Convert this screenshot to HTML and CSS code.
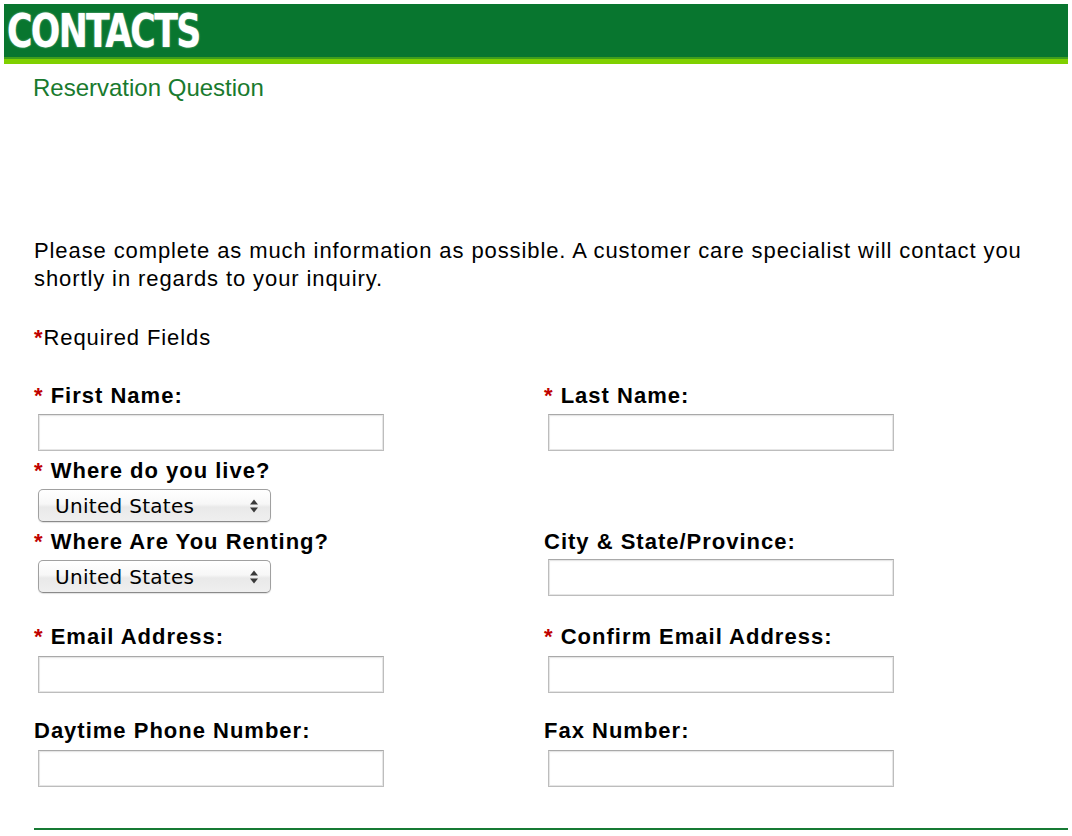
FILE: index.html
```html
<!DOCTYPE html>
<html lang="en">
<head>
<meta charset="utf-8">
<title>Contacts</title>
<link rel="stylesheet" href="styles.css">
</head>
<body>
<header class="banner">
  <h1 class="banner-title">CONTACTS</h1>
</header>
<div class="banner-stripe"></div>

<main class="content">
  <h2 class="subtitle">Reservation Question</h2>

  <p class="intro">Please complete as much information as possible. A customer care specialist will contact you shortly in regards to your inquiry.</p>

  <p class="required-note"><span class="req">*</span>Required Fields</p>

  <form class="form">
    <div class="row">
      <div class="field">
        <label class="label"><span class="req">*</span> First Name:</label>
        <input class="text-input" type="text">
      </div>
      <div class="field">
        <label class="label"><span class="req">*</span> Last Name:</label>
        <input class="text-input" type="text">
      </div>
    </div>

    <div class="row">
      <div class="field">
        <label class="label"><span class="req">*</span> Where do you live?</label>
        <div class="select-wrap">
          <select class="select"><option>United States</option></select>
          <svg class="select-arrows" width="10" height="16" viewBox="0 0 10 16"><path d="M5 1.5 L9 6.5 L1 6.5 Z M5 14.5 L9 9.5 L1 9.5 Z" fill="#3a3a3a"/></svg>
        </div>
      </div>
      <div class="field"></div>
    </div>

    <div class="row">
      <div class="field">
        <label class="label"><span class="req">*</span> Where Are You Renting?</label>
        <div class="select-wrap">
          <select class="select"><option>United States</option></select>
          <svg class="select-arrows" width="10" height="16" viewBox="0 0 10 16"><path d="M5 1.5 L9 6.5 L1 6.5 Z M5 14.5 L9 9.5 L1 9.5 Z" fill="#3a3a3a"/></svg>
        </div>
      </div>
      <div class="field">
        <label class="label">City &amp; State/Province:</label>
        <input class="text-input input-tight" type="text">
      </div>
    </div>

    <div class="row row-spaced row-email">
      <div class="field">
        <label class="label"><span class="req">*</span> Email Address:</label>
        <input class="text-input" type="text">
      </div>
      <div class="field">
        <label class="label"><span class="req">*</span> Confirm Email Address:</label>
        <input class="text-input" type="text">
      </div>
    </div>

    <div class="row row-spaced row-phone">
      <div class="field">
        <label class="label">Daytime Phone Number:</label>
        <input class="text-input" type="text">
      </div>
      <div class="field">
        <label class="label">Fax Number:</label>
        <input class="text-input" type="text">
      </div>
    </div>
  </form>

  <hr class="rule">
</main>
</body>
</html>
```

FILE: styles.css
```css
html, body {
  background: #ffffff;
}

body {
  margin: 4px;
  font-family: "Liberation Sans", Arial, Helvetica, sans-serif;
  color: #000;
}

.banner {
  height: 53px;
  background: #08762f;
  display: flex;
  align-items: center;
  overflow: hidden;
}

.banner-title {
  margin: 0 0 0 3px;
  font-family: "DejaVu Sans Condensed", "DejaVu Sans", sans-serif;
  font-weight: bold;
  font-size: 46px;
  line-height: 53px;
  letter-spacing: -2px;
  color: #ffffff;
  text-shadow: 0 0 2px rgba(255, 255, 255, 0.6);
  transform: translateY(1px) scaleX(0.84);
  transform-origin: left center;
}

.banner-stripe {
  height: 5px;
  background: #7fd000;
  border-top: 2px solid #3f9f1c;
}

.content {
  padding-left: 30px;
}

.subtitle {
  margin: 10px 0 0 -1px;
  font-weight: normal;
  font-size: 24px;
  line-height: 28px;
  color: #197a2e;
}

.intro {
  margin: 135px 0 0 0;
  font-size: 22px;
  letter-spacing: 0.9px;
  line-height: 28px;
  padding-right: 20px;
}

.required-note {
  margin: 31px 0 0 0;
  font-size: 22px;
  letter-spacing: 0.9px;
  line-height: 28px;
}

.req {
  color: #c00000;
  font-weight: bold;
}

.form {
  margin-top: 31px;
}

.row {
  display: grid;
  grid-template-columns: 510px 510px;
  margin-bottom: 7px;
}

.row-email {
  margin-top: 28px;
}

.row-phone {
  margin-top: 25px;
}

.field {
  display: flex;
  flex-direction: column;
  align-items: flex-start;
}

.label {
  font-weight: bold;
  font-size: 22px;
  letter-spacing: 1px;
  line-height: 26px;
  white-space: nowrap;
}

.text-input {
  margin: 5px 0 0 4px;
  width: 346px;
  height: 37px;
  box-sizing: border-box;
  border: 1px solid #bdbdbd;
  border-top-color: #a9a9a9;
  box-shadow: inset 0 0 0 1px #e6e6e6, inset 0 1px 2px rgba(0, 0, 0, 0.08);
  background: #fff;
  padding: 0 6px;
  font-size: 18px;
}

.input-tight {
  margin-top: 4px;
}

.row-spaced .text-input {
  margin-top: 6px;
}

.select-wrap {
  position: relative;
  margin: 5px 0 0 4px;
  width: 233px;
  height: 33px;
}

.select {
  appearance: none;
  -webkit-appearance: none;
  width: 233px;
  height: 33px;
  box-sizing: border-box;
  border: 1px solid #a0a0a0;
  border-bottom-color: #8a8a8a;
  border-radius: 5px;
  background: linear-gradient(#ffffff 0%, #f7f7f7 45%, #e9e9e9 55%, #efefef 100%);
  box-shadow: 0 1px 1px rgba(0, 0, 0, 0.12);
  padding: 0 0 0 16px;
  font-family: "DejaVu Sans", sans-serif;
  font-size: 20px;
  letter-spacing: 0.3px;
  color: #000;
}

.select-arrows {
  position: absolute;
  right: 12px;
  top: 9px;
  pointer-events: none;
}

.rule {
  margin: 41px 0 0 0;
  border: 0;
  height: 2px;
  background: #177a34;
}
```
